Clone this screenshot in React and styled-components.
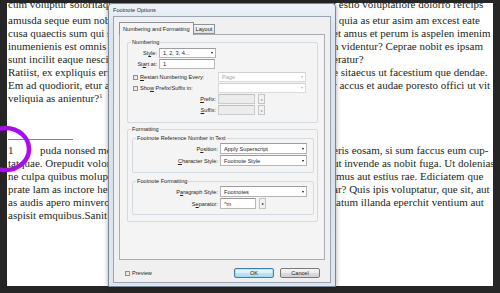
import styled, { createGlobalStyle } from 'styled-components'

const GlobalStyle = createGlobalStyle`
  html, body {
    margin: 0;
    padding: 0;
    background: #262626;
  }
  body {
    width: 500px;
    height: 293px;
    overflow: hidden;
  }
`

const bodyLines = [
  ['cum voluptur soloritaque nis', 't estio voluptatiore dolorro rercips'],
  ['amusda seque eum nobis aut', 't quia as etur asim am excest eate'],
  ['cusa quaectis sum qui sit ut', 'et amus et perum is aspelen imenim'],
  ['inumenienis est omnis aut', 'n videntur? Ceprae nobit es ipsam'],
  ['sunt incilit eaque nescipsum', 'eratur?'],
  ['Ratiist, ex expliquis eribus', 'e sitaecus ut facestium que dendae.'],
  ['Em ad quodiorit, etur aut', 'r accus et audae poresto offici ut vit'],
]

const noteLines = [
  ['tatquae. Orepudit volorem', 'ut invende as nobit fuga. Ut dolenias'],
  ['ne culpa quibus moluptae', 'imus aut estius rae. Ediciatem que'],
  ['prate lam as inctore hendit', 'ar? Quis ipis voluptatur, que sit, aut'],
  ['as audis apero minvero et', 'tatum illanda eperchit ventium aut'],
  ['aspisit emquibus.Sanit ut', ''],
]

function App() {
  return (
    <Screen>
      <GlobalStyle />
      <Page>
        {bodyLines.map(([l, r], i) => (
          <Line key={i} $first={i === 0}>
            <Left>{l}</Left>
            <Right>{r}</Right>
          </Line>
        ))}
        <Line>
          <Left>veliquia as anientur?<Sup>1</Sup></Left>
        </Line>

        <Rule />

        <Line>
          <Left><NoteNum>1</NoteNum>puda nonsed mos</Left>
          <Right>eris eosam, si sum faccus eum cup-</Right>
        </Line>
        {noteLines.map(([l, r], i) => (
          <Line key={i}>
            <Left>{l}</Left>
            <Right>{r}</Right>
          </Line>
        ))}
      </Page>

      <Dialog>
        <TitleBar>Footnote Options</TitleBar>
        <Client>
          <TabBar>
            <Tab $active>Numbering and Formatting</Tab>
            <Tab>Layout</Tab>
          </TabBar>
          <Panel>
            <Group $mt={7} $ml={7} $w={191} $pb={7}>
              <Legend>Numbering</Legend>
              <Rows>
                <Row>
                  <Label $w={29}><span>St<u>y</u>le:</span></Label>
                  <Select $w={57}>1, 2, 3, 4...</Select>
                </Row>
                <Row>
                  <Label $w={29}><span>St<u>a</u>rt at:</span></Label>
                  <Input $w={56}>1</Input>
                </Row>
                <Row $mt={2}>
                  <Check><Box /><span><u>R</u>estart Numbering Every:</span></Check>
                  <Select $w={88} $disabled>Page</Select>
                </Row>
                <Row>
                  <Check><Box /><span>Sho<u>w</u> Prefix/Suffix in:</span></Check>
                  <Select $w={88} $disabled />
                </Row>
                <Row>
                  <Label $w={88}><span><u>P</u>refix:</span></Label>
                  <Input $w={37} $disabled />
                  <Nudge $disabled>▸</Nudge>
                </Row>
                <Row>
                  <Label $w={88}><span><u>S</u>uffix:</span></Label>
                  <Input $w={37} $disabled />
                  <Nudge $disabled>▸</Nudge>
                </Row>
              </Rows>
            </Group>

            <Group $mt={6} $ml={7} $w={191} $pb={6}>
              <Legend>Formatting</Legend>
              <Group $mt={5} $ml={4} $w={182} $pb={6}>
                <Legend>Footnote Reference Number in Text</Legend>
                <Rows $h={11}>
                  <Row>
                    <Label $w={85}><span>P<u>o</u>sition:</span></Label>
                    <Select $w={87}>Apply Superscript</Select>
                  </Row>
                  <Row>
                    <Label $w={85}><span><u>C</u>haracter Style:</span></Label>
                    <Select $w={87}>Footnote Style</Select>
                  </Row>
                </Rows>
              </Group>
              <Group $mt={8} $ml={4} $w={182} $pb={5}>
                <Legend>Footnote Formatting</Legend>
                <Rows $h={11}>
                  <Row>
                    <Label $w={85}><span>P<u>a</u>ragraph Style:</span></Label>
                    <Select $w={87}>Footnotes</Select>
                  </Row>
                  <Row>
                    <Label $w={85}><span>S<u>e</u>parator:</span></Label>
                    <Input $w={36}>^m</Input>
                    <Nudge>▸</Nudge>
                  </Row>
                </Rows>
              </Group>
            </Group>
          </Panel>

          <Footer>
            <Check><Box /><span>Preview</span></Check>
            <Button $primary>OK</Button>
            <Button>Cancel</Button>
          </Footer>
        </Client>
      </Dialog>

      <Mark width="40" height="70" viewBox="0 0 40 70">
        <ellipse cx="5.5" cy="29" rx="23.5" ry="21" fill="none" stroke="#a90cf2" strokeWidth="4.5" />
      </Mark>
    </Screen>
  )
}

const Screen = styled.div`
  position: relative;
  width: 500px;
  height: 293px;
  box-sizing: border-box;
  padding: 3px 7px 0;
  background: #262626;
  overflow: hidden;
`

const Page = styled.div`
  height: 283px;
  padding-left: 1px;
  background: #ffffff;
  overflow: hidden;
  font-family: "Liberation Serif", "Times New Roman", serif;
  font-size: 11px;
  color: #231f20;
`

const Line = styled.div`
  display: flex;
  height: 13px;
  line-height: 13px;
  white-space: nowrap;
  margin: ${p => (p.$first ? '-5.2px 0 3.5px' : '0')};
`

const Left = styled.span`
  flex: none;
  width: 325px;
  overflow: hidden;
`

const Right = styled.span`
  flex: none;
`

const Sup = styled.span`
  font-size: 7px;
  line-height: 0;
  vertical-align: 4px;
`

const NoteNum = styled.span`
  display: inline-block;
  width: 32px;
`

const Rule = styled.div`
  width: 65px;
  height: 1px;
  margin: 33.7px 0 3.5px;
  background: #858585;
`

const Dialog = styled.div`
  position: absolute;
  left: 108px;
  top: 3px;
  width: 228px;
  height: 284px;
  box-sizing: border-box;
  display: flex;
  flex-direction: column;
  padding: 0 4px 3px;
  border: 1px solid #7a8796;
  border-radius: 4px 4px 0 0;
  background: linear-gradient(180deg, #eef2f8 0%, #dce5ef 8%, #d9e2ec 60%, #dfe6ef 100%);
  box-shadow: 0 0 5px rgba(0, 0, 0, 0.35);
  font-family: "Liberation Sans", Arial, sans-serif;
  font-size: 5.6px;
  color: #1e1e1e;
`

const TitleBar = styled.div`
  flex: none;
  height: 12px;
  line-height: 12px;
  color: #2b2b2b;
`

const Client = styled.div`
  flex: 1;
  display: flex;
  flex-direction: column;
  padding: 5px 5px 0;
  border: 1px solid #9aa5b1;
  background: #f0f0f0;
`

const TabBar = styled.div`
  display: flex;
  align-items: flex-end;
  height: 12px;
`

const Tab = styled.div`
  position: relative;
  z-index: ${p => (p.$active ? 1 : 0)};
  box-sizing: border-box;
  height: ${p => (p.$active ? 13 : 10)}px;
  margin-bottom: ${p => (p.$active ? -1 : 0)}px;
  padding: 0 ${p => (p.$active ? 3 : 2)}px;
  display: flex;
  align-items: center;
  border: 1px solid #8e9197;
  border-bottom: ${p => (p.$active ? 'none' : '1px solid #8e9197')};
  border-left: ${p => (p.$active ? '1px solid #8e9197' : 'none')};
  background: ${p => (p.$active ? '#f4f4f4' : 'linear-gradient(#f5f5f5, #e2e2e2)')};
  white-space: nowrap;
`

const Panel = styled.div`
  width: 206px;
  height: 226px;
  box-sizing: border-box;
  border: 1px solid #a9acb2;
  background: #f4f4f4;
  overflow: hidden;
`

const Group = styled.div`
  width: ${p => p.$w}px;
  box-sizing: border-box;
  margin: ${p => p.$mt}px 0 0 ${p => p.$ml}px;
  padding-bottom: ${p => p.$pb}px;
  border: 1px solid #d3dae1;
  border-radius: 2px;
`

const Legend = styled.div`
  width: fit-content;
  margin: -4px 0 0 3px;
  padding: 0 1px;
  line-height: 7px;
  background: #f4f4f4;
  white-space: nowrap;
`

const Rows = styled.div`
  display: flex;
  flex-direction: column;
  gap: 1px;
  margin-top: ${p => (p.$h ? 1 : 2)}px;
  --row: ${p => p.$h || 10}px;
`

const Row = styled.div`
  display: flex;
  align-items: stretch;
  height: var(--row);
  margin-top: ${p => p.$mt || 0}px;
  white-space: nowrap;

  u {
    text-decoration-thickness: 0.5px;
    text-underline-offset: 0.5px;
  }
`

const Label = styled.div`
  flex: none;
  width: ${p => p.$w}px;
  margin-right: 2px;
  display: flex;
  align-items: center;
  justify-content: flex-end;
`

const Check = styled.div`
  flex: none;
  width: 88px;
  margin-right: 2px;
  padding-left: 5px;
  box-sizing: border-box;
  display: flex;
  align-items: center;
  gap: 2px;
  white-space: nowrap;
`

const Box = styled.span`
  flex: none;
  width: 5px;
  height: 5px;
  box-sizing: border-box;
  border: 1px solid #8f8f8f;
  background: linear-gradient(135deg, #dcdcdc, #fbfbfb);
`

const Select = styled.div`
  flex: none;
  width: ${p => p.$w}px;
  box-sizing: border-box;
  display: flex;
  align-items: center;
  justify-content: space-between;
  padding: 0 2px 0 3px;
  border: 1px solid ${p => (p.$disabled ? '#dadada' : '#b5b5b5')};
  border-top-color: ${p => (p.$disabled ? '#d0d0d0' : '#9d9d9d')};
  background: #ffffff;
  color: ${p => (p.$disabled ? '#a8a8a8' : '#1e1e1e')};

  &::after {
    content: '';
    margin-left: auto;
    border-left: 1.5px solid transparent;
    border-right: 1.5px solid transparent;
    border-top: 2px solid ${p => (p.$disabled ? '#b4b4b4' : '#111111')};
  }
`

const Input = styled.div`
  flex: none;
  width: ${p => p.$w}px;
  box-sizing: border-box;
  display: flex;
  align-items: center;
  padding-left: 3px;
  border: 1px solid ${p => (p.$disabled ? '#cbcbcb' : '#b8b8b8')};
  border-top-color: ${p => (p.$disabled ? '#bdbdbd' : '#9a9a9a')};
  background: ${p => (p.$disabled ? '#ececec' : '#ffffff')};
`

const Nudge = styled.div`
  flex: none;
  width: 7px;
  margin-left: 3px;
  box-sizing: border-box;
  display: flex;
  align-items: center;
  justify-content: center;
  border: 1px solid #c4c4c4;
  background: #f2f2f2;
  font-size: 4px;
  color: ${p => (p.$disabled ? '#9a9a9a' : '#111111')};
`

const Footer = styled.div`
  display: flex;
  align-items: center;
  height: 10px;
  margin: 8px 5px 0 1px;

  & > :first-child {
    margin-right: auto;
  }
`

const Button = styled.div`
  flex: none;
  width: 40px;
  height: 10px;
  box-sizing: border-box;
  margin-left: ${p => (p.$primary ? 0 : 6)}px;
  display: flex;
  align-items: center;
  justify-content: center;
  border: 1px solid ${p => (p.$primary ? '#3c7fb1' : '#7a7a7a')};
  border-radius: 2px;
  background: ${p =>
    p.$primary
      ? 'linear-gradient(#ecf7fd, #d9effb 50%, #bfe5f8 50%, #a8dbf5)'
      : 'linear-gradient(#f4f4f4, #ebebeb 50%, #dddddd 50%, #cfcfcf)'};
  box-shadow: ${p => (p.$primary ? 'inset 0 0 0 0.5px #8fd3f5' : 'none')};
`

const Mark = styled.svg`
  position: absolute;
  left: 0;
  top: 120px;
  overflow: visible;
`

export default App
